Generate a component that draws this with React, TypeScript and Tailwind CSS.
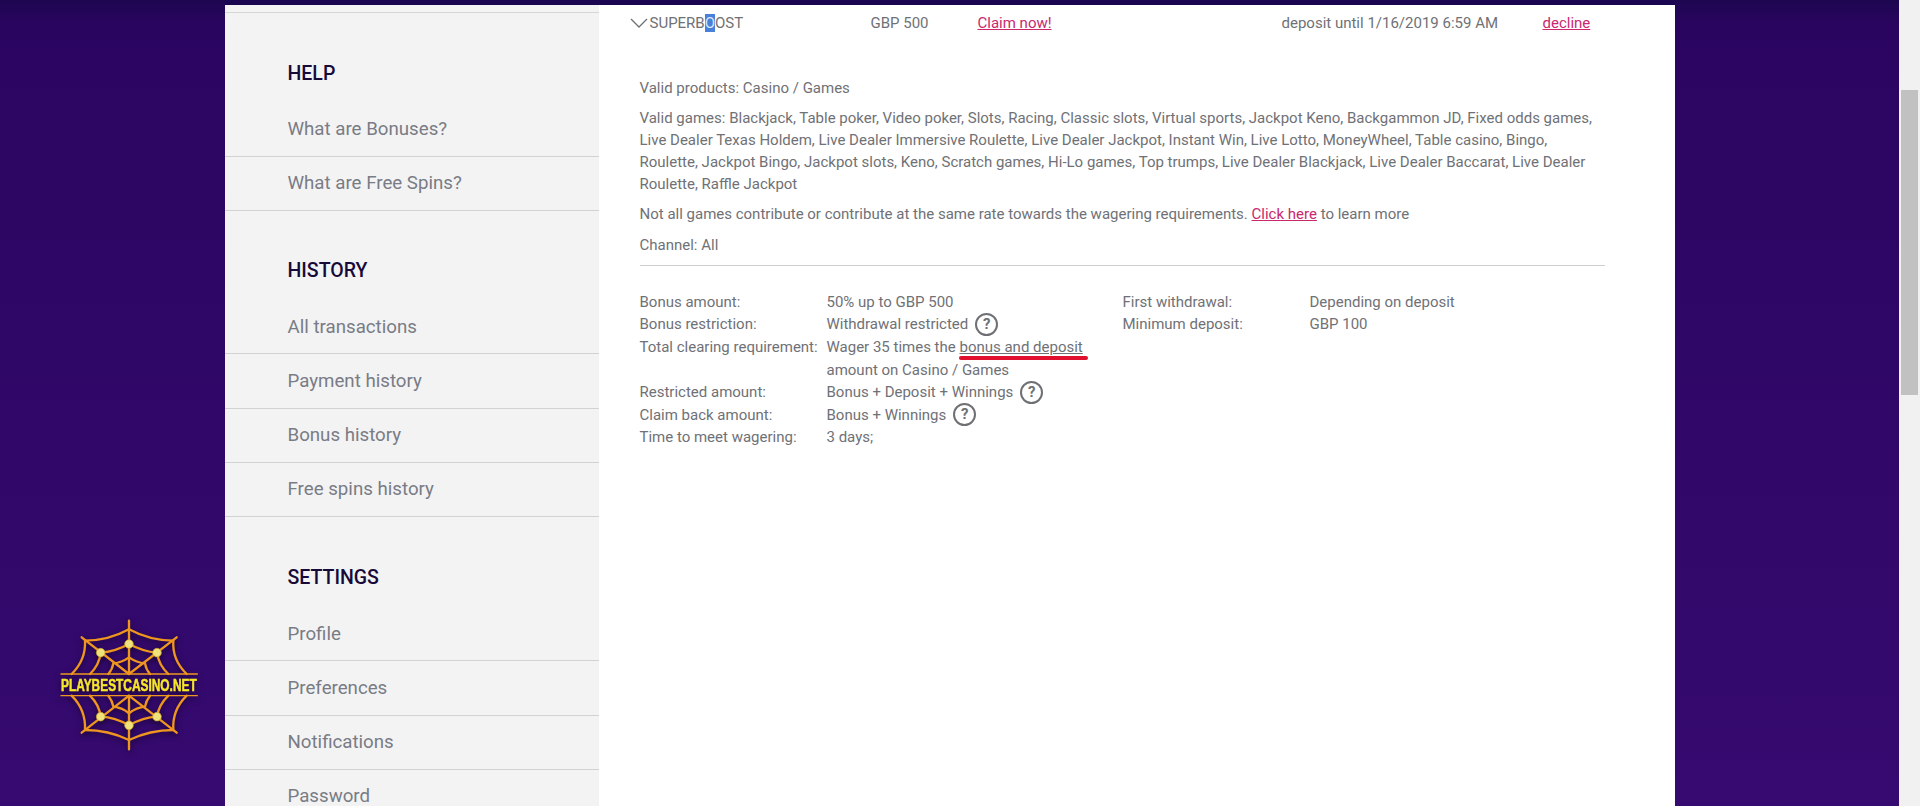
import React from 'react';

const sections = [
    { title: 'HELP', items: ['What are Bonuses?', 'What are Free Spins?'] },
    { title: 'HISTORY', items: ['All transactions', 'Payment history', 'Bonus history', 'Free spins history'] },
    { title: 'SETTINGS', items: ['Profile', 'Preferences', 'Notifications', 'Password'] },
];

function HelpIcon() {
    return (
        <span className="inline-flex items-center justify-center w-[23px] h-[23px] ml-[7px] rounded-full border-2 border-[#6e7074] text-[15px] font-bold leading-none text-[#6e7074]">?</span>
    );
}

function Row({ label, children }: { label?: string; children: React.ReactNode }) {
    return (
        <div className="flex items-center h-[22.6px]">
            <div className="w-[187px] shrink-0">{label}</div>
            <div className="flex items-center whitespace-nowrap">{children}</div>
        </div>
    );
}

function Logo() {
    const rings = [
        'M387 88Q450 122 520 122Q516 180 560 222M560 287Q516 330 520 390Q450 390 387 420Q325 390 255 390Q258 330 215 287M215 222Q258 180 255 122Q325 122 387 88',
        'M387 132Q430 155 471 158Q476 195 505 222M505 287Q476 315 471 350Q430 352 387 376Q345 352 302 350Q298 315 270 287M270 222Q298 195 302 158Q345 155 387 132',
        'M387 172Q410 188 435 190Q438 208 450 222M450 287Q438 302 435 320Q410 322 387 340Q365 322 340 320Q337 302 325 287M325 222Q337 208 340 190Q365 188 387 172',
    ];
    const dots = [[387, 132], [302, 158], [471, 158], [302, 350], [471, 350], [387, 376]];
    return (
        <svg className="absolute left-[50px] top-[610px] w-[160px] h-[150px] overflow-visible drop-shadow-[0_2px_3px_rgba(0,0,0,0.6)]" viewBox="150 30 480 450">
            <g fill="none" stroke="#ee961f" strokeWidth="7" strokeLinecap="round">
                <path d="M387 62V222M387 287V448M245 112L387 222M530 112L387 222M387 287L245 398M387 287L530 398" />
                {rings.map((d) => <path key={d} d={d} />)}
                <path d="M183 222H592M183 287H592" strokeWidth="4" />
            </g>
            {dots.map(([cx, cy]) => <circle key={cx + '-' + cy} cx={cx} cy={cy} r="13" fill="#f0e27a" stroke="#c9a020" strokeWidth="2" />)}
            <text x="183" y="272" textLength="407" lengthAdjust="spacingAndGlyphs" fontFamily="'Liberation Sans', sans-serif" fontWeight="700" fontSize="48" fill="#f6e62a" stroke="#f6e62a" strokeWidth="1.5">PLAYBESTCASINO.NET</text>
        </svg>
    );
}

export default function App() {
    return (
        <div className="relative flex h-[806px] overflow-hidden bg-gradient-to-b from-[#1d0650] via-[#2a0560] via-[3%] to-[#360a70] font-['Roboto',sans-serif]">
            <div className="flex-1 flex justify-center">
                <div className="w-[1450px] h-full flex flex-col">
                    <div className="h-[4.5px] bg-[#1a0550] shrink-0"></div>
                    <div className="flex flex-1 min-h-0">
                        {/* Sidebar */}
                        <div className="w-[374px] shrink-0 bg-[#f3f3f4] pt-[7px]">
                            <div className="border-t border-[#d6d6d6] mb-[1px]"></div>
                            {sections.map((section) => (
                                <div key={section.title} className="pt-[31px] last:pt-[32px]">
                                    <div className="h-[58px] pl-[63px] flex items-center text-[19.5px] font-medium text-[#170a38]">{section.title}</div>
                                    {section.items.map((item) => (
                                        <div key={item} className="h-[54.25px] pl-[63px] flex items-center border-b border-[#d2d2d2] text-[18.7px] text-[#797c85]">{item}</div>
                                    ))}
                                </div>
                            ))}
                        </div>

                        {/* Bonus details */}
                        <div className="flex-1 bg-white text-[15px] leading-[22px] text-[#6f7176]">
                            <div className="flex items-center h-[27px] mt-[5px]">
                                <svg className="ml-[31px] w-[18px] h-[12px]" viewBox="0 0 18 12" fill="none" stroke="#6f7176" strokeWidth="1.3"><path d="M1 2l8 8 8-8" /></svg>
                                <div className="w-[223px] pl-[2px]">SUPERB<span className="bg-[#4a80d8] text-[#dbe6f8]">O</span>OST</div>
                                <div className="w-[107px]">GBP 500</div>
                                <div className="w-[304px]"><a className="underline text-[#c9286f]">Claim now!</a></div>
                                <div className="w-[261px]">deposit until 1/16/2019 6:59 AM</div>
                                <a className="underline text-[#c9286f]">decline</a>
                            </div>
                            <div className="ml-[41px] mr-[70px] mt-[40px]">
                                <p>Valid products: Casino / Games</p>
                                <p className="mt-[8px]">Valid games: Blackjack, Table poker, Video poker, Slots, Racing, Classic slots, Virtual sports, Jackpot Keno, Backgammon JD, Fixed odds games, Live Dealer Texas Holdem, Live Dealer Immersive Roulette, Live Dealer Jackpot, Instant Win, Live Lotto, MoneyWheel, Table casino, Bingo, Roulette, Jackpot Bingo, Jackpot slots, Keno, Scratch games, Hi-Lo games, Top trumps, Live Dealer Blackjack, Live Dealer Baccarat, Live Dealer Roulette, Raffle Jackpot</p>
                                <p className="mt-[8px]">Not all games contribute or contribute at the same rate towards the wagering requirements. <a className="underline text-[#c9286f]">Click here</a> to learn more</p>
                                <p className="mt-[9px]">Channel: All</p>
                                <div className="mt-[9px] border-t border-[#cfcfcf]"></div>
                                <div className="flex mt-[25px]">
                                    <div className="w-[483px] shrink-0">
                                        <Row label="Bonus amount:">50% up to GBP 500</Row>
                                        <Row label="Bonus restriction:">Withdrawal restricted<HelpIcon /></Row>
                                        <Row label="Total clearing requirement:">
                                            <span>Wager 35 times the <a className="relative underline">bonus and deposit
                                                <span className="absolute left-0 top-[18px] w-[129px] h-[4px] rounded-full bg-[#e0102e]"></span>
                                            </a></span>
                                        </Row>
                                        <Row>amount on Casino / Games</Row>
                                        <Row label="Restricted amount:">Bonus + Deposit + Winnings<HelpIcon /></Row>
                                        <Row label="Claim back amount:">Bonus + Winnings<HelpIcon /></Row>
                                        <Row label="Time to meet wagering:">3 days;</Row>
                                    </div>
                                    <div className="flex-1">
                                        <Row label="First withdrawal:">Depending on deposit</Row>
                                        <Row label="Minimum deposit:">GBP 100</Row>
                                    </div>
                                </div>
                            </div>
                        </div>
                    </div>
                </div>
            </div>

            {/* Scrollbar */}
            <div className="w-[21px] shrink-0 bg-[#f1f1f1] pt-[90px] pl-[2px] pr-[2px]">
                <div className="h-[305px] bg-[#c1c1c1]"></div>
            </div>

            <Logo />
        </div>
    );
}
